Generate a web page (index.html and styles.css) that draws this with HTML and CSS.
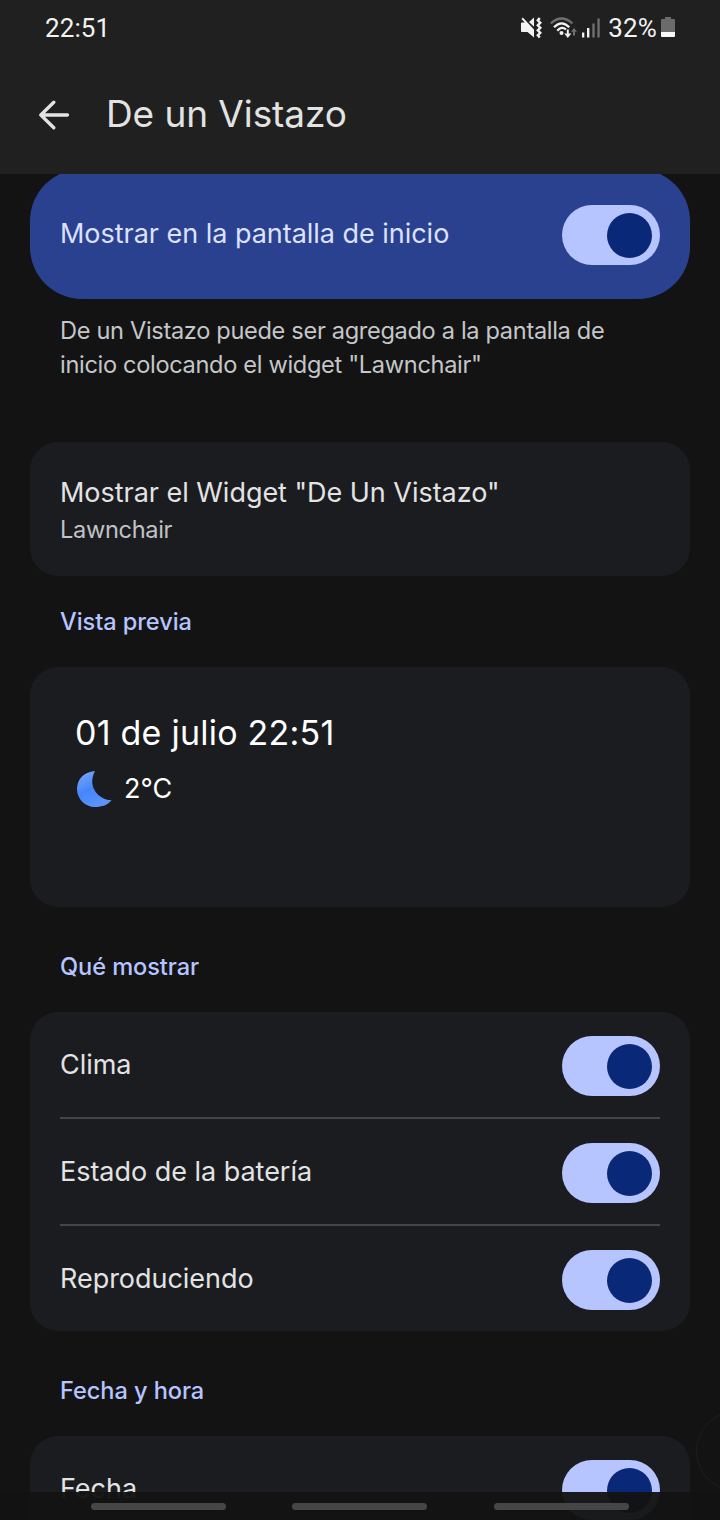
FILE: index.html
```html
<!DOCTYPE html>
<html lang="es">
<head>
<meta charset="utf-8">
<title>De un Vistazo</title>
<link rel="stylesheet" href="styles.css">
</head>
<body>
<div class="screen">
  <div class="status">
    <span class="clock">22:51</span>
    <div class="indicators">
      <svg class="mute" width="22" height="22" viewBox="0 0 22 22">
        <path d="M1.800.5L13 12.500V20.500L6.500 15H1Q0 15 0 14V6.500Q0 5.500 1 5.500H3.800L.5 2z" fill="#f2f2f2"/>
        <path d="M8 5L13 .5V9.800z" fill="#f2f2f2"/>
        <path d="M18.800 1l-2 2.300 2.500 2.500-2.500 2.500 2.500 2.500-2.500 2.500 2.500 2.500-2.500 2.500 2 2.200" fill="none" stroke="#f2f2f2" stroke-width="2.400"/>
      </svg>
      <svg class="wifi" width="28" height="24" viewBox="0 0 28 24">
        <g fill="none" stroke-width="2.200">
          <path d="M.8 7.500Q11.500-2.500 22.500 7.500" stroke="#707070"/>
          <path d="M4 11.300Q11.500 3.500 19.300 11.300" stroke="#f2f2f2"/>
          <path d="M7.300 14.800Q11.500 9.500 16 13.500" stroke="#f2f2f2"/>
          <path d="M17.800 13.500v5" stroke="#f2f2f2" stroke-width="2"/>
          <path d="M24 19.500v-5" stroke="#707070" stroke-width="2"/>
        </g>
        <circle cx="11.500" cy="17" r="2" fill="#f2f2f2"/>
        <path d="M14.300 17.500h7L17.800 22z" fill="#f2f2f2"/>
        <path d="M21 15.800h6L24 12z" fill="#707070"/>
      </svg>
      <svg class="signal" width="18" height="20" viewBox="0 0 18 20">
        <rect x="0" y="14.500" width="2.300" height="5" fill="#f2f2f2"/>
        <rect x="5" y="10" width="2.400" height="9.500" fill="#f2f2f2"/>
        <rect x="10.300" y="5.500" width="2.400" height="14" fill="#707070"/>
        <rect x="15.400" y=".5" width="2.300" height="19" fill="#707070"/>
      </svg>
      <span class="percent">32%</span>
      <svg class="battery" width="14" height="21" viewBox="0 0 14 21">
        <path d="M4 0h6v2h3q1 0 1 1v12H0V3q0-1 1-1h3z" fill="#6b6b6b"/>
        <path d="M0 15h14v4q0 1-1 1H1q-1 0-1-1z" fill="#f8f8f8"/>
      </svg>
    </div>
  </div>
  <header class="appbar">
    <svg class="back" width="30" height="30" viewBox="0 0 30 30">
      <path d="M28.500 15H2M14.800 2.200L1.800 15 14.800 27.800" fill="none" stroke="#e3e3e3" stroke-width="3.300" stroke-linecap="round" stroke-linejoin="round"/>
    </svg>
    <h1 class="title">De un Vistazo</h1>
  </header>
  <main class="content">
    <div class="hero">
      <span class="label label-hero">Mostrar en la pantalla de inicio</span>
      <span class="switch"><span class="thumb"></span></span>
    </div>
    <p class="description">De un Vistazo puede ser agregado a la pantalla de<br>inicio colocando el widget "Lawnchair"</p>
    <section class="card card-widget">
      <div class="label">Mostrar el Widget "De Un Vistazo"</div>
      <div class="sub">Lawnchair</div>
    </section>
    <h2 class="heading heading-preview">Vista previa</h2>
    <section class="card card-preview">
      <div class="date">01 de julio 22:51</div>
      <div class="weather">
        <svg class="moon" width="38" height="40" viewBox="0 0 38 40">
          <defs>
            <linearGradient id="night" x1="0" y1="0" x2=".5" y2="1">
              <stop offset="0" stop-color="#82aafa"/>
              <stop offset=".55" stop-color="#4487fb"/>
              <stop offset="1" stop-color="#5b93fa"/>
            </linearGradient>
          </defs>
          <path d="M20 3C8 4 2 12 2 21C2 31 10 39 20 39C27 39 33 37 36.500 32C26 33 11 20 20 3z" fill="url(#night)"/>
        </svg>
        <span class="temp">2°C</span>
      </div>
    </section>
    <h2 class="heading heading-show">Qué mostrar</h2>
    <section class="card card-list">
      <div class="row"><span class="label">Clima</span><span class="switch"><span class="thumb"></span></span></div>
      <div class="row"><span class="label">Estado de la batería</span><span class="switch"><span class="thumb"></span></span></div>
      <div class="row"><span class="label">Reproduciendo</span><span class="switch"><span class="thumb"></span></span></div>
    </section>
    <h2 class="heading heading-date">Fecha y hora</h2>
    <section class="card card-date">
      <div class="row"><span class="label">Fecha</span><span class="switch"><span class="thumb"></span></span></div>
    </section>
  </main>
  <div class="edge-ring"></div>
  <nav class="gestures"><span class="pill"></span><span class="pill"></span><span class="pill"></span></nav>
</div>
</body>
</html>
```
FILE: styles.css
```css
* { box-sizing: border-box; margin: 0; padding: 0; }
body { background: #131313; }
svg { display: block; flex: none; }

.screen {
  position: relative;
  display: flex;
  flex-direction: column;
  width: 720px;
  height: 1520px;
  overflow: hidden;
  background: #131313;
  color: #e3e3e3;
  font-family: Inter, "Liberation Sans", sans-serif;
}

.status {
  display: flex;
  justify-content: space-between;
  align-items: center;
  height: 56px;
  padding: 0 45px;
  background: #202020;
  color: #f2f2f2;
  font-family: Roboto, "Liberation Sans", sans-serif;
  font-size: 26px;
}
.clock { letter-spacing: 0.1px; }
.indicators { display: flex; align-items: center; }
.mute { margin-bottom: 1px; }
.wifi { margin-left: 7px; }
.signal { margin-left: 4px; margin-bottom: 1px; }
.percent { margin-left: 8px; letter-spacing: 0.2px; }
.battery { margin-left: 4px; margin-bottom: 1px; }

.appbar {
  display: flex;
  align-items: center;
  height: 118px;
  padding: 0 39px 2px;
  background: #202020;
}
.back { margin-top: 1px; }
.title {
  margin-left: 37px;
  padding-bottom: 2px;
  font-size: 37px;
  font-weight: 400;
  letter-spacing: -0.08px;
}

.content {
  height: 1346px;
  padding: 0 30px;
  overflow: hidden;
}

.hero {
  display: flex;
  justify-content: space-between;
  align-items: center;
  height: 130px;
  margin-top: -5px;
  padding: 2px 30px 0;
  border-radius: 52px;
  background: #2a418f;
  color: #dde1ff;
}
.label { font-size: 27px; line-height: 36px; letter-spacing: -0.03px; }
.hero .label, .row .label { padding-bottom: 2px; }

.switch {
  display: flex;
  flex: none;
  justify-content: flex-end;
  align-items: center;
  width: 98px;
  height: 60px;
  padding-right: 8px;
  border-radius: 30px;
  background: #b6c4ff;
}
.thumb { width: 45px; height: 45px; border-radius: 50%; background: #092978; }

.description {
  margin: 15px 30px 0;
  color: #c4c6c9;
  font-size: 23.6px;
  line-height: 34px;
  letter-spacing: -0.33px;
}

.card { border-radius: 28px; background: #1b1c1f; }
.card-widget { height: 134px; margin-top: 60px; padding: 33px 30px 0; }
.sub { margin-top: 2px; color: #c0c2c5; font-size: 23.6px; line-height: 34px; letter-spacing: -0.33px; }

.heading {
  margin: 0 30px;
  color: #b6c4ff;
  font-size: 23.6px;
  font-weight: 500;
  line-height: 34px;
  letter-spacing: -0.08px;
}
.heading-preview { margin-top: 29px; }
.card-preview { height: 240px; margin-top: 28px; padding: 44px 45px 0; color: #fff; }
.date { font-size: 34px; line-height: 44px; letter-spacing: 0.23px; }
.weather { display: flex; align-items: center; margin-top: 13px; }
.temp { margin-left: 11px; font-size: 27px; }

.heading-show { margin-top: 43px; }
.card-list { height: 319px; margin-top: 28px; padding: 0 30px; }
.row {
  display: flex;
  justify-content: space-between;
  align-items: center;
  height: 107px;
  border-bottom: 2px solid #434548;
  padding-top: 3px;
}
.row:last-child { border-bottom-color: transparent; }
.heading-date { margin-top: 43px; }
.card-date { height: 160px; margin-top: 28px; padding: 0 30px; }

.edge-ring {
  position: absolute;
  top: 1411px;
  left: 696px;
  width: 80px;
  height: 80px;
  border: 1px solid #1e1e1e;
  border-radius: 50%;
}
.gestures {
  position: absolute;
  left: 0;
  right: 0;
  bottom: 0;
  display: flex;
  gap: 66px;
  height: 28px;
  padding: 11px 91px 0;
  background: rgba(19, 19, 19, 0.96);
}
.pill { flex: none; width: 135px; height: 7px; border-radius: 4px; background: #464646; }
.pill:last-child { margin-left: 1px; }
```
